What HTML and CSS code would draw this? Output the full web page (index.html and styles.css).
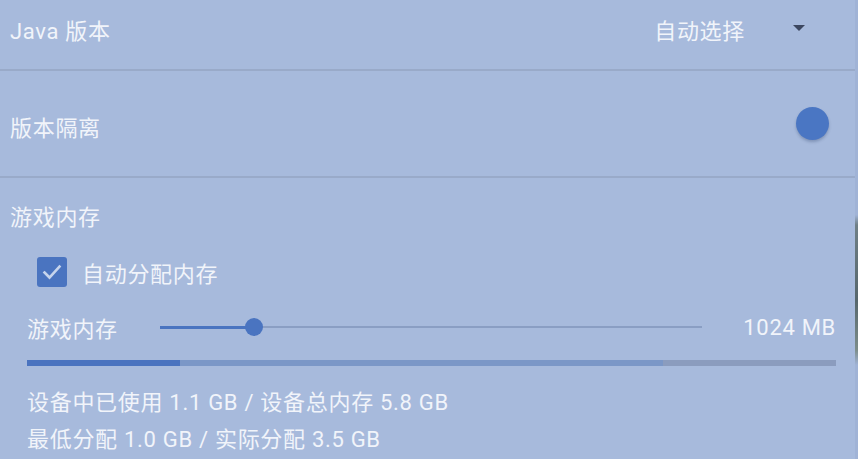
FILE: index.html
```html
<!DOCTYPE html>
<html lang="zh-CN">
<head>
<meta charset="utf-8">
<title>游戏设置</title>
<link rel="stylesheet" href="styles.css">
</head>
<body>
<div class="page">
  <main class="content">
    <div class="row row-java">
      <span class="label">Java 版本</span>
      <div class="select">
        <span class="select-text">自动选择</span>
        <span class="caret"></span>
      </div>
    </div>
    <div class="divider"></div>
    <div class="row row-isolate">
      <span class="label label-low">版本隔离</span>
      <span class="toggle-thumb"></span>
    </div>
    <div class="divider"></div>
    <section class="memory">
      <div class="section-title">游戏内存</div>
      <label class="check-row">
        <span class="checkbox">
          <svg viewBox="0 0 30 30" width="30" height="30" aria-hidden="true">
            <path d="M7.5 15.5 L12.5 20.5 L22.5 9.5" fill="none" stroke="#c6d4ec" stroke-width="2.6" stroke-linecap="square"/>
          </svg>
        </span>
        <span class="check-label">自动分配内存</span>
      </label>
      <div class="slider-row">
        <span class="slider-label">游戏内存</span>
        <div class="slider">
          <div class="track-active" style="width: 94px"></div>
          <div class="track-rest"></div>
          <span class="thumb" style="left: 94px"></span>
        </div>
        <span class="slider-value">1024 MB</span>
      </div>
      <div class="usage-bar">
        <div class="seg seg-used" style="width: 18.9%"></div>
        <div class="seg seg-alloc" style="width: 59.7%"></div>
        <div class="seg seg-free"></div>
      </div>
      <div class="info">
        <div class="info-line">设备中已使用 1.1 GB / 设备总内存 5.8 GB</div>
        <div class="info-line">最低分配 1.0 GB / 实际分配 3.5 GB</div>
      </div>
    </section>
  </main>
  <div class="edge"></div>
</div>
</body>
</html>
```

FILE: styles.css
```css
html, body {
  margin: 0;
  padding: 0;
}

body {
  width: 858px;
  height: 459px;
  overflow: hidden;
  background: #a7badc;
  font-family: Roboto, "Noto Sans CJK SC", sans-serif;
  font-size: 22px;
  letter-spacing: 0.7px;
  color: #f1f4fa;
}

.page {
  display: flex;
  width: 858px;
  height: 459px;
}

.content {
  flex: 1;
  display: flex;
  flex-direction: column;
}

.edge {
  width: 3px;
  background: linear-gradient(to bottom,
    #a0b3d6 0px, #a0b3d6 215px,
    #6f7f86 225px, #56666c 300px, #7d8d8a 350px,
    #a0b3d6 365px, #a0b3d6 459px);
}

.row {
  display: flex;
  align-items: center;
  justify-content: space-between;
  padding: 0 26px 0 10px;
}

.row-java {
  height: 57px;
  padding-bottom: 12px;
  padding-right: 50px;
}

.row-isolate {
  height: 105px;
}

.label-low {
  margin-top: 5px;
}

.divider {
  height: 2px;
  background: #99aac9;
}

.select {
  display: flex;
  align-items: center;
  gap: 48px;
}

.caret {
  width: 0;
  height: 0;
  border-left: 6.5px solid transparent;
  border-right: 6.5px solid transparent;
  border-top: 6.5px solid #3c4760;
  margin-top: -2px;
}

.toggle-thumb {
  width: 33px;
  height: 33px;
  border-radius: 50%;
  background: #4a76c3;
  box-shadow: 0 2px 3px rgba(40, 60, 100, 0.3);
  margin-top: -1px;
}

.memory {
  display: flex;
  flex-direction: column;
  padding-top: 25px;
}

.section-title {
  line-height: 30px;
  padding-left: 10px;
}

.check-row {
  display: flex;
  align-items: center;
  gap: 15px;
  height: 30px;
  margin-top: 24px;
  padding-left: 37px;
}

.check-label {
  margin-top: -1px;
}

.checkbox {
  width: 30px;
  height: 30px;
  border-radius: 3px;
  background: #4a74c0;
  display: flex;
}

.slider-row {
  display: flex;
  align-items: center;
  height: 30px;
  margin-top: 25px;
  padding-left: 27px;
  padding-right: 20px;
}

.slider-label {
  width: 133px;
}

.slider {
  flex: 1;
  position: relative;
  display: flex;
  align-items: center;
  height: 18px;
}

.track-active {
  height: 3px;
  background: #4a74c0;
}

.track-rest {
  flex: 1;
  height: 2px;
  background: #8a9ec3;
}

.thumb {
  position: absolute;
  top: 0;
  width: 18px;
  height: 18px;
  margin-left: -9px;
  border-radius: 50%;
  background: #4a74c0;
}

.slider-value {
  width: 134px;
  text-align: right;
  margin-right: -1px;
}

.usage-bar {
  display: flex;
  height: 6px;
  margin: 18px 19px 0 27px;
}

.seg-used {
  background: #4a73bf;
}

.seg-alloc {
  background: #7b97c7;
}

.seg-free {
  flex: 1;
  background: #8b9cbe;
}

.info {
  margin-top: 18px;
  padding-left: 27px;
}

.info-line {
  line-height: 37px;
}
```
